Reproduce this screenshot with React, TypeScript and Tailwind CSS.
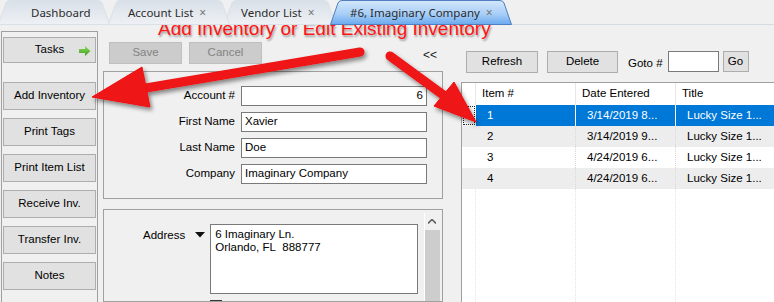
import React from "react";

const tabs = [
  { label: "Dashboard", w: 112, ml: -2, pl: 33, close: false, active: false },
  { label: "Account List", w: 122, ml: -2, pl: 20, close: true, active: false },
  { label: "Vendor List", w: 112, ml: -6, pl: 17, close: true, active: false },
  { label: "#6, Imaginary Company", w: 182, ml: -6, pl: 20, close: true, active: true },
];

const tasks = ["Add Inventory", "Print Tags", "Print Item List", "Receive Inv.", "Transfer Inv.", "Notes"];

const fields = [
  { label: "Account #", value: "6", right: true },
  { label: "First Name", value: "Xavier" },
  { label: "Last Name", value: "Doe" },
  { label: "Company", value: "Imaginary Company" },
];

const rows = [
  { id: "1", date: "3/14/2019 8...", title: "Lucky Size 1..." },
  { id: "2", date: "3/14/2019 9...", title: "Lucky Size 1..." },
  { id: "3", date: "4/24/2019 6...", title: "Lucky Size 1..." },
  { id: "4", date: "4/24/2019 6...", title: "Lucky Size 1..." },
];

function Tab({ t, i }: { t: (typeof tabs)[number]; i: number }) {
  const W = t.w;
  const d = `M0.5,24.5 L8,3 Q9,0.5 12,0.5 L${W - 12},0.5 Q${W - 9},0.5 ${W - 8},3 L${W - 0.5},24.5 Z`;
  return (
    <div
      className="relative h-[25px] flex items-center shrink-0"
      style={{ width: W, marginLeft: t.ml, paddingLeft: t.pl, zIndex: t.active ? 5 : 4 - i }}
    >
      <svg className="absolute inset-0" width={W} height={25}>
        <defs>
          <linearGradient id={`tg${i}`} x1="0" y1="0" x2="0" y2="1">
            {t.active ? (
              <>
                <stop offset="0" stopColor="#d3e7fc" />
                <stop offset="0.55" stopColor="#a9cff7" />
                <stop offset="1" stopColor="#6aa9ef" />
              </>
            ) : (
              <>
                <stop offset="0" stopColor="#d9e0e8" />
                <stop offset="1" stopColor="#eef1f5" />
              </>
            )}
          </linearGradient>
        </defs>
        <path d={d} fill={`url(#tg${i})`} stroke={t.active ? "#4f7fbf" : "#d9e0e8"} strokeWidth="1" />
      </svg>
      <span className="relative leading-[14px] text-[#2b2b2b] font-['Noto_Sans',sans-serif] text-[11.5px]">{t.label}</span>
      {t.close && (
        <span className="relative leading-[14px] ml-[6px] text-[#777] text-[12px] font-['Noto_Sans',sans-serif]">×</span>
      )}
    </div>
  );
}

function Btn({ children, className = "", disabled = false }: { children?: React.ReactNode; className?: string; disabled?: boolean }) {
  return (
    <div
      className={`flex items-center justify-center border shrink-0 ${
        disabled ? "border-[#bfbfbf] bg-[#cccccc] text-[#838383]" : "border-[#adadad] bg-[#e1e1e1] text-black"
      } ${className}`}
    >
      {children}
    </div>
  );
}

export default function App() {
  return (
    <div className="relative w-[774px] h-[302px] overflow-hidden bg-[#f0f0f0] font-['Liberation_Sans',Arial,sans-serif] text-[11.5px] text-black">
      {/* tab strip */}
      <div className="flex h-[25px] border-b border-[#d3dbe5] bg-[#f0f0f0]">
        {tabs.map((t, i) => (
          <Tab key={t.label} t={t} i={i} />
        ))}
      </div>

      <div className="flex h-[277px]">
        {/* task sidebar */}
        <div className="w-[99px] shrink-0 pt-[6px] pl-[1px]">
          <div className="h-full w-[97px] border-l border-r border-t border-[#a0a0a0] pt-[5px] pl-[1px] flex flex-col">
            <Btn className="w-[93px] h-[26px] relative">
              Tasks
              <svg className="absolute right-[4px] top-[8px]" width="12" height="10" viewBox="0 0 12 10">
                <defs>
                  <linearGradient id="ga" x1="0" y1="0" x2="0" y2="1">
                    <stop offset="0" stopColor="#8fdc5a" />
                    <stop offset="1" stopColor="#3e9e26" />
                  </linearGradient>
                </defs>
                <path d="M0,3 L6,3 L6,0 L11.5,5 L6,10 L6,7 L0,7 Z" fill="url(#ga)" />
              </svg>
            </Btn>
            <div className="mt-[19px] flex flex-col gap-[8px]">
              {tasks.map((t) => (
                <Btn key={t} className="w-[93px] h-[28px]">
                  {t}
                </Btn>
              ))}
            </div>
          </div>
        </div>

        {/* account form */}
        <div className="w-[362px] shrink-0 flex flex-col min-h-0">
          <div className="flex items-start pt-[17px] pl-[10px] h-[46px] shrink-0">
            <Btn disabled className="w-[73px] h-[22px]">Save</Btn>
            <Btn disabled className="w-[73px] h-[22px] ml-[7px]">Cancel</Btn>
            <span className="ml-[161px] mt-[7px] text-[12px] leading-none text-[#222]">&lt;&lt;</span>
          </div>
          <div className="ml-[4px] w-[340px] h-[128px] shrink-0 border border-[#a0a0a0] pt-[14px]">
            <div className="grid grid-cols-[131px_186px] gap-x-[6px] gap-y-[6px]">
              {fields.map((f) => (
                <React.Fragment key={f.label}>
                  <div className="h-[20px] flex items-center justify-end">{f.label}</div>
                  <div
                    className={`h-[20px] border border-[#7a7a7a] bg-white flex items-center px-[3px] ${
                      f.right ? "justify-end" : ""
                    }`}
                  >
                    {f.value}
                  </div>
                </React.Fragment>
              ))}
            </div>
          </div>
          <div className="ml-[4px] mt-[10px] w-[340px] flex-1 min-h-0 overflow-hidden border border-[#a0a0a0] flex">
            <div className="flex-1 flex items-start pt-[14px] pl-[39px]">
              <span className="mt-[3px]">Address</span>
              <svg className="ml-[10px] mt-[8px]" width="10" height="6" viewBox="0 0 10 6">
                <path d="M0,0 L10,0 L5,5.5 Z" fill="#111" />
              </svg>
              <div className="ml-[5px] flex flex-col">
                <div className="w-[208px] h-[70px] border border-[#7a7a7a] bg-white px-[4px] pt-[3px] leading-[13px]">
                  6 Imaginary Ln.
                  <br />
                  Orlando, FL&nbsp;&nbsp;888777
                </div>
                <div className="mt-[6px] w-[12px] h-[12px] border border-[#333] bg-white" />
              </div>
            </div>
            <div className="mt-[3px] mr-[3px] w-[15px] border-l border-white flex flex-col items-center">
              <svg className="mt-[6px]" width="8" height="5" viewBox="0 0 8 5">
                <path d="M0,4.5 L4,0.5 L8,4.5" fill="none" stroke="#606060" strokeWidth="1.6" />
              </svg>
              <div className="mt-[6px] w-[15px] flex-1 bg-[#cdcdcd]" />
            </div>
          </div>
        </div>

        {/* inventory list */}
        <div className="flex-1 flex flex-col">
          <div className="flex pt-[26px] pl-[5px] h-[57px] items-start">
            <Btn className="w-[72px] h-[22px]">Refresh</Btn>
            <Btn className="w-[71px] h-[22px] ml-[9px]">Delete</Btn>
            <span className="ml-[10px] mt-[4px]">Goto #</span>
            <div className="ml-[5px] w-[51px] h-[21px] border border-[#7a7a7a] bg-white" />
            <Btn className="ml-[4px] w-[26px] h-[21px]">Go</Btn>
          </div>
          <div className="flex-1 border-l border-t border-[#a0a0a0] bg-white flex flex-col">
            <div className="flex h-[22px] items-center">
              <div className="w-[14px] h-full border-r border-[#e8e8e8]" />
              <div className="w-[100px] h-full flex items-center pl-[6px] border-r border-[#e8e8e8]">Item #</div>
              <div className="w-[100px] h-full flex items-center pl-[6px] border-r border-[#e8e8e8]">Date Entered</div>
              <div className="w-[100px] h-full flex items-center pl-[6px]">Title</div>
            </div>
            {rows.map((r, i) => {
              const sel = i === 0;
              const bg = sel ? "bg-[#0078d7] text-white" : i % 2 === 1 ? "bg-[#ededed]" : "bg-white";
              const sep = sel ? "border-white" : "border-dotted border-[#d8d8d8]";
              return (
                <div key={r.id} className={`flex h-[21px] ${i % 2 === 1 ? "bg-[#ededed]" : "bg-white"}`}>
                  <div className="w-[14px] h-full p-[1px]">
                    {sel && <div className="w-full h-full border border-dotted border-[#222]" />}
                  </div>
                  <div className={`w-[100px] h-full flex items-center pl-[11px] border-r ${sep} ${bg}`}>{r.id}</div>
                  <div className={`w-[100px] h-full flex items-center pl-[11px] border-r ${sep} ${bg}`}>{r.date}</div>
                  <div className={`w-[100px] h-full flex items-center pl-[11px] ${bg}`}>{r.title}</div>
                </div>
              );
            })}
            <div className="flex flex-1">
              <div className="w-[14px] border-r border-dotted border-[#e4e4e4]" />
              <div className="w-[100px] border-r border-dotted border-[#e4e4e4]" />
              <div className="w-[100px] border-r border-dotted border-[#e4e4e4]" />
            </div>
          </div>
        </div>
      </div>

      {/* annotation arrows */}
      <svg className="absolute inset-0 pointer-events-none" width="774" height="302">
        <defs>
          <filter id="sh" x="-10%" y="-20%" width="130%" height="150%">
            <feDropShadow dx="2" dy="3" stdDeviation="2" floodColor="#000" floodOpacity="0.45" />
          </filter>
        </defs>
        <g filter="url(#sh)" fill="#ee1212" stroke="#ee1212">
          <line x1="360" y1="52" x2="146" y2="88" strokeWidth="9" strokeLinecap="round" />
          <polygon points="92,97 150,107 142,67" strokeWidth="1" />
          <line x1="390" y1="56" x2="446" y2="97" strokeWidth="9" strokeLinecap="round" />
          <polygon points="476,122 434,106 454,82" strokeWidth="1" />
        </g>
      </svg>
      <div className="absolute left-[158px] top-[21px] text-[19px] leading-[16px] text-[#ff1515] [text-shadow:1px_2px_2px_rgba(0,0,0,0.35)] whitespace-nowrap">
        Add Inventory or Edit Existing Inventory
      </div>
    </div>
  );
}
